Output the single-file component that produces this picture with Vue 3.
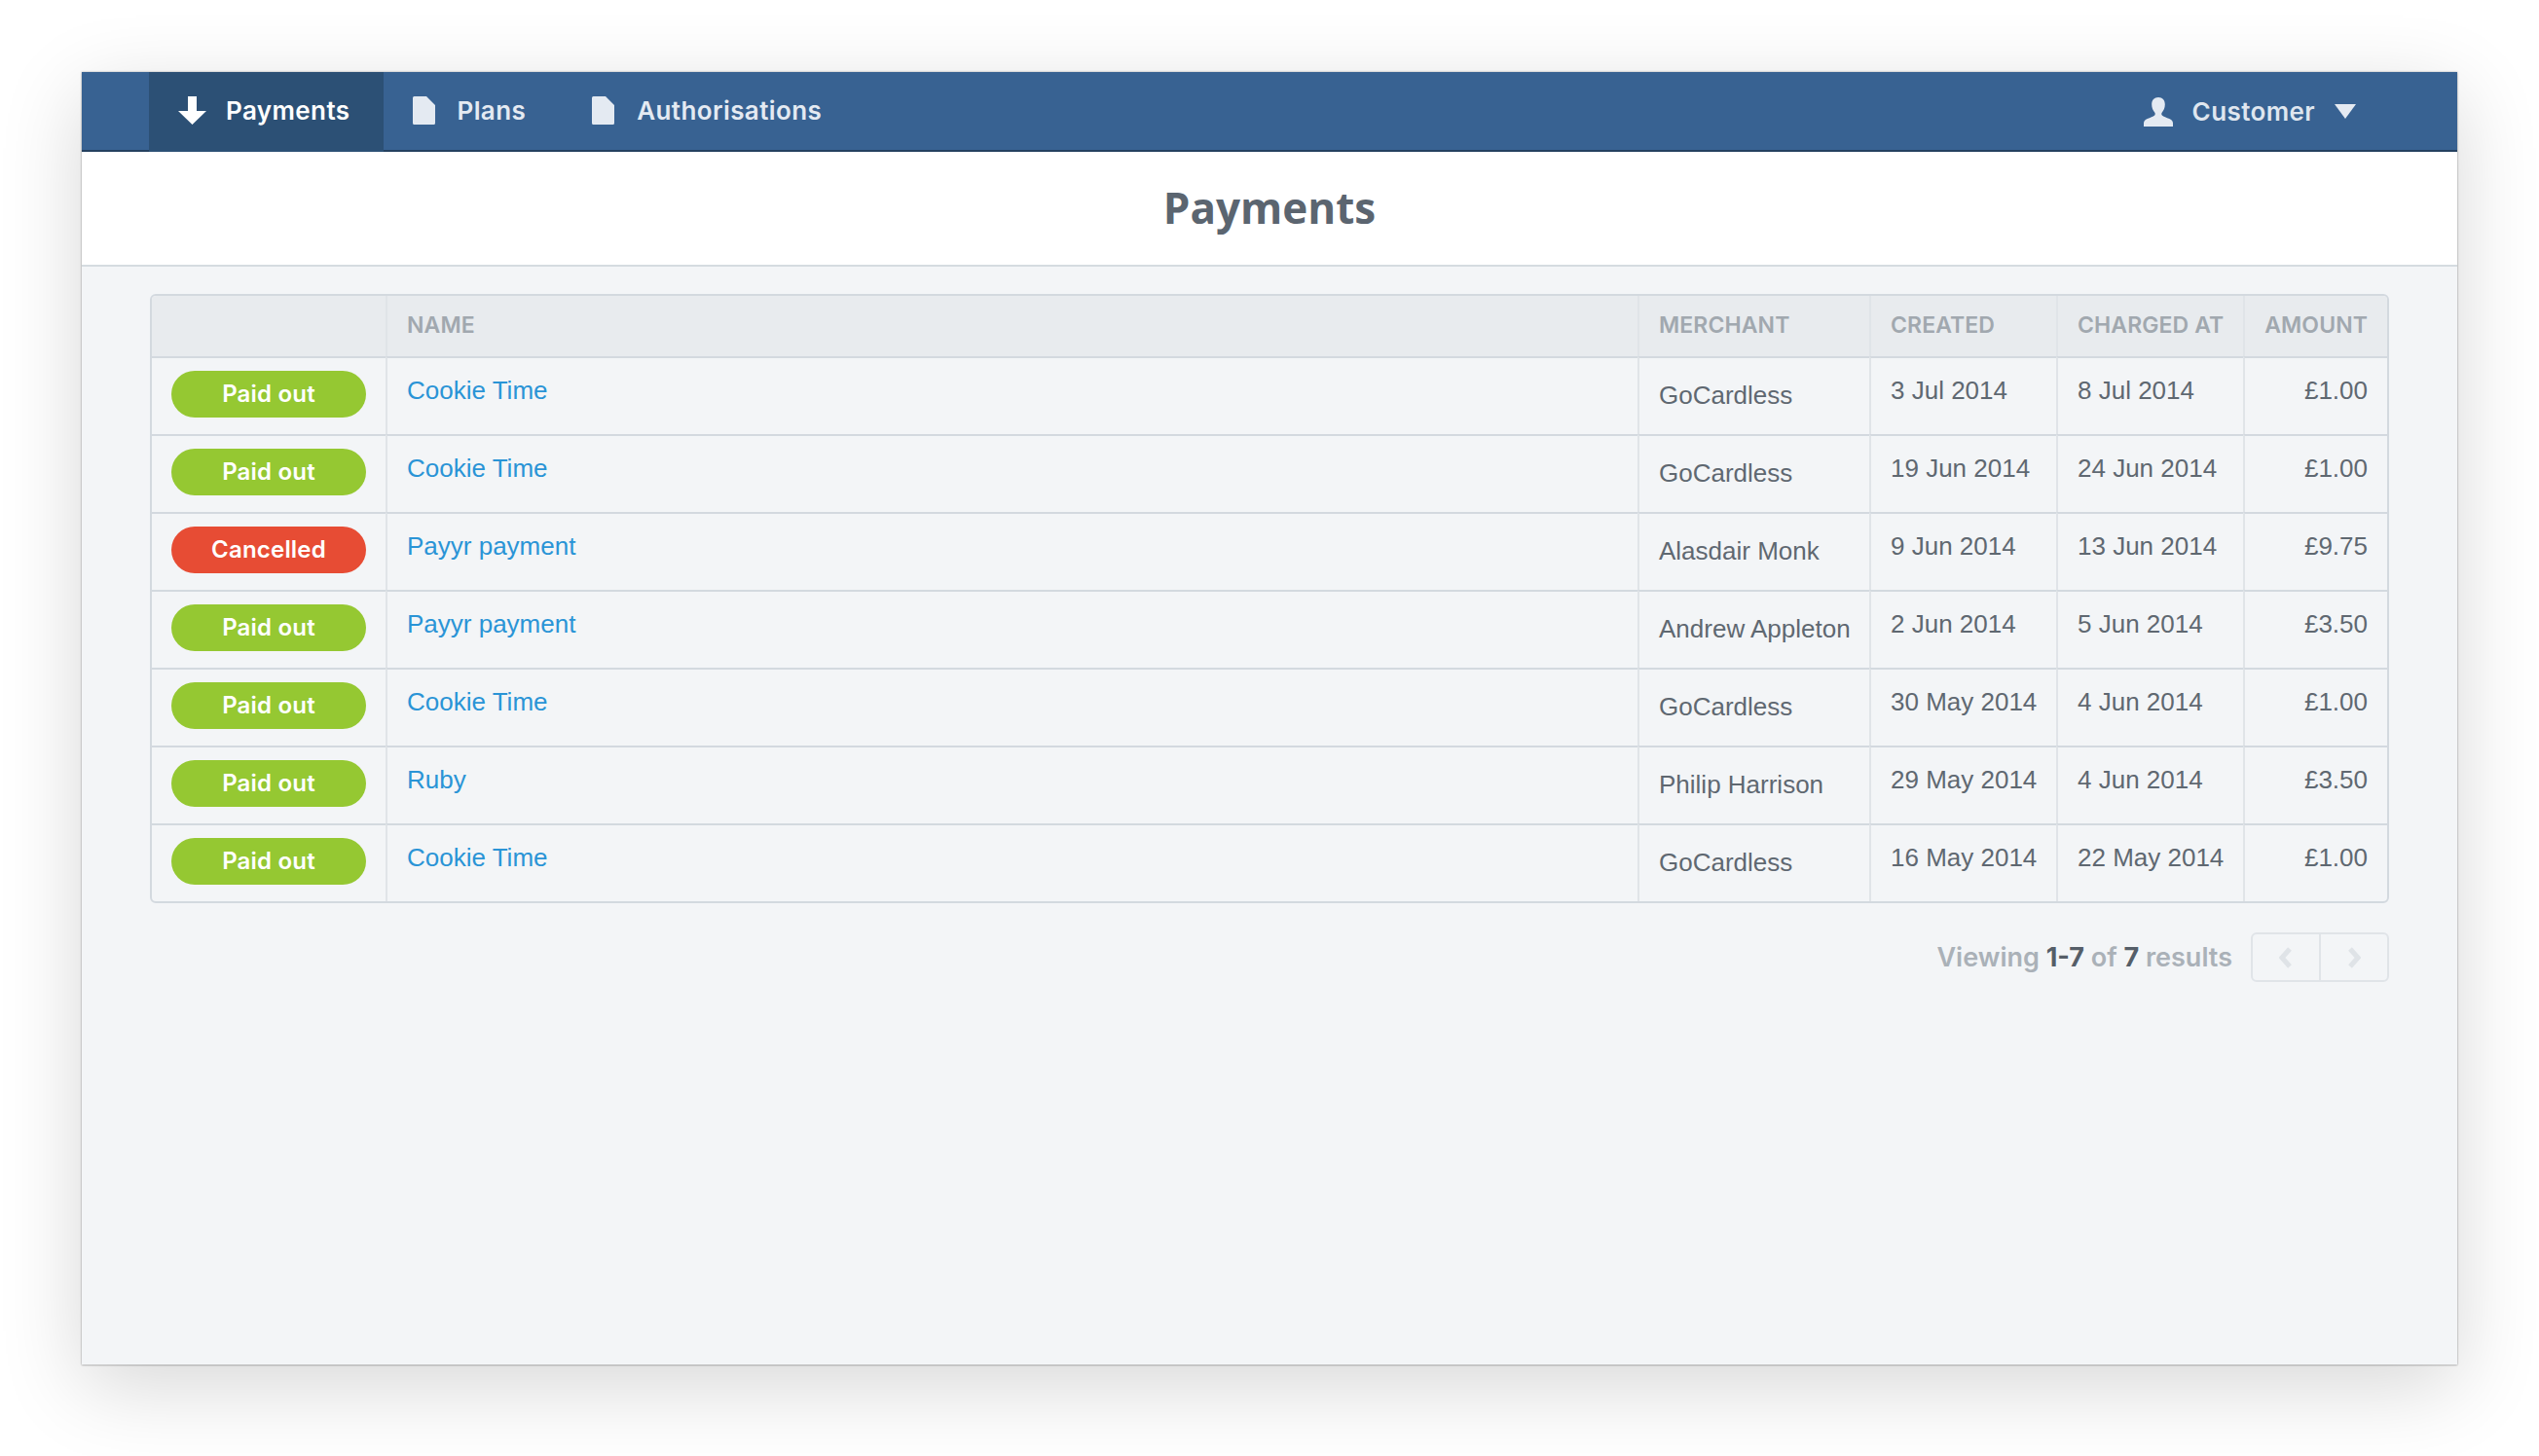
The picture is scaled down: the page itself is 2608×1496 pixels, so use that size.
<template>
  <div class="page">
    <div class="window">
      <nav class="nav">
        <div class="nav-links">
          <a class="nav-link active">
            <svg class="icon-arrow" viewBox="0 0 29 29"><path d="M10 0h9v15h10L14.500 29 0 15h10z" /></svg>
            Payments
          </a>
          <a class="nav-link">
            <svg class="icon-file" viewBox="0 0 23 29"><path d="M1.500 0H14l9 9v18.500a1.500 1.500 0 0 1-1.500 1.500h-20A1.500 1.500 0 0 1 0 27.500v-26A1.500 1.500 0 0 1 1.500 0z" /></svg>
            Plans
          </a>
          <a class="nav-link">
            <svg class="icon-file" viewBox="0 0 23 29"><path d="M1.500 0H14l9 9v18.500a1.500 1.500 0 0 1-1.500 1.500h-20A1.500 1.500 0 0 1 0 27.500v-26A1.500 1.500 0 0 1 1.500 0z" /></svg>
            Authorisations
          </a>
        </div>
        <div class="nav-user">
          <svg class="icon-user" viewBox="0 0 30 30"><path d="M15 0c4.300 0 6.800 3 6.800 7.300 0 3.300-1.300 6.300-3 8.200-.7.800-.7 2.200 0 2.900 1.500 1.400 4.600 2.300 7.500 3.700 2 1 3.700 2.300 3.700 4.400V30H0v-3.500c0-2.100 1.700-3.400 3.700-4.400 2.900-1.400 6-2.300 7.500-3.700.7-.7.7-2.100 0-2.900-1.700-1.900-3-4.900-3-8.200C8.200 3 10.700 0 15 0z" /></svg>
          <span>Customer</span>
          <svg class="icon-caret" viewBox="0 0 22 15"><path d="M0 0h22L11 15z" /></svg>
        </div>
      </nav>

      <header class="title-bar">
        <h1>Payments</h1>
      </header>

      <main class="content">
        <div class="table-wrap">
          <table>
            <colgroup>
              <col v-for="w in colWidths" :key="w.id" :style="{ width: w.px + 'px' }" />
            </colgroup>
            <thead>
              <tr>
                <th></th>
                <th>Name</th>
                <th>Merchant</th>
                <th>Created</th>
                <th>Charged at</th>
                <th class="right">Amount</th>
              </tr>
            </thead>
            <tbody>
              <tr v-for="p in payments" :key="p.id">
                <td class="status-cell">
                  <span class="badge" :class="p.status === 'Cancelled' ? 'red' : 'green'">{{ p.status }}</span>
                </td>
                <td><a class="link">{{ p.name }}</a></td>
                <td class="merchant">{{ p.merchant }}</td>
                <td>{{ p.created }}</td>
                <td>{{ p.charged }}</td>
                <td class="right">{{ p.amount }}</td>
              </tr>
            </tbody>
          </table>
        </div>

        <div class="pager">
          <span class="pager-text">Viewing <b>1-7</b> of <b>7</b> results</span>
          <div class="pager-btns">
            <button>
              <svg viewBox="0 0 14 24"><path d="M11 3 3 12l8 9" /></svg>
            </button>
            <button>
              <svg viewBox="0 0 14 24"><path d="M3 3l8 9-8 9" /></svg>
            </button>
          </div>
        </div>
      </main>
    </div>
  </div>
</template>

<script setup>
const colWidths = [
  { id: 'status', px: 240 },
  { id: 'name', px: 1286 },
  { id: 'merchant', px: 238 },
  { id: 'created', px: 192 },
  { id: 'charged', px: 192 },
  { id: 'amount', px: 148 }
];

const payments = [
  { id: 1, status: 'Paid out', name: 'Cookie Time', merchant: 'GoCardless', created: '3 Jul 2014', charged: '8 Jul 2014', amount: '£1.00' },
  { id: 2, status: 'Paid out', name: 'Cookie Time', merchant: 'GoCardless', created: '19 Jun 2014', charged: '24 Jun 2014', amount: '£1.00' },
  { id: 3, status: 'Cancelled', name: 'Payyr payment', merchant: 'Alasdair Monk', created: '9 Jun 2014', charged: '13 Jun 2014', amount: '£9.75' },
  { id: 4, status: 'Paid out', name: 'Payyr payment', merchant: 'Andrew Appleton', created: '2 Jun 2014', charged: '5 Jun 2014', amount: '£3.50' },
  { id: 5, status: 'Paid out', name: 'Cookie Time', merchant: 'GoCardless', created: '30 May 2014', charged: '4 Jun 2014', amount: '£1.00' },
  { id: 6, status: 'Paid out', name: 'Ruby', merchant: 'Philip Harrison', created: '29 May 2014', charged: '4 Jun 2014', amount: '£3.50' },
  { id: 7, status: 'Paid out', name: 'Cookie Time', merchant: 'GoCardless', created: '16 May 2014', charged: '22 May 2014', amount: '£1.00' }
];
</script>

<style scoped>
.page {
  padding: 74px 84px 94px;
  background: #fff;
  height: 1496px;
  box-sizing: border-box;
  overflow: hidden;
}

.window {
  height: 1328px;
  display: flex;
  flex-direction: column;
  background: #f3f5f7;
  box-shadow: 0 0 2px rgba(0, 0, 0, 0.3), 0 1px 2px rgba(0, 0, 0, 0.15), 0 22px 80px rgba(0, 0, 0, 0.16);
}

.nav {
  height: 80px;
  flex: none;
  display: flex;
  justify-content: space-between;
  padding-left: 69px;
  background: #386292;
  border-bottom: 2px solid #24405f;
  font-family: Inter, "Noto Sans", sans-serif;
  font-weight: 600;
  font-size: 26px;
  letter-spacing: 0.4px;
}

.nav-links {
  display: flex;
}

.nav-link {
  display: flex;
  align-items: center;
  gap: 20px;
  padding: 0 35px 3px 30px;
  color: #e4eaf2;
  margin-bottom: -2px;
}

.nav-link + .nav-link {
  padding-left: 30px;
  padding-right: 0;
  gap: 22px;
}

.nav-link + .nav-link + .nav-link {
  padding-left: 68px;
  gap: 23px;
}

.nav-link.active {
  background: #2c5075;
  color: #fff;
}

.icon-arrow {
  width: 29px;
  height: 29px;
  fill: #fff;
}

.icon-file {
  width: 23px;
  height: 29px;
  fill: #e4eaf2;
}

.nav-user {
  display: flex;
  align-items: center;
  padding-right: 104px;
  padding-top: 1px;
  color: #dfe6ef;
}

.icon-user {
  width: 30px;
  height: 30px;
  fill: #e4eaf2;
  margin-right: 20px;
}

.icon-caret {
  width: 22px;
  height: 15px;
  fill: #e4eaf2;
  margin-left: 20px;
}

.title-bar {
  height: 118px;
  flex: none;
  box-sizing: border-box;
  display: flex;
  align-items: center;
  justify-content: center;
  background: #fff;
  border-bottom: 2px solid #d5dbe0;
}

h1 {
  margin: 0 0 3px;
  font-family: "Open Sans", sans-serif;
  font-weight: 700;
  font-size: 44px;
  color: #5b6570;
}

.content {
  padding: 28px 70px 0;
}

.table-wrap {
  border: 2px solid #d3d9df;
  border-radius: 6px;
  overflow: hidden;
}

table {
  width: 2296px;
  table-layout: fixed;
  border-collapse: separate;
  border-spacing: 0;
  font-family: "Liberation Sans", Arial, sans-serif;
  font-size: 26px;
  color: #5f6871;
}

th {
  height: 62px;
  padding: 0 20px 2px;
  box-sizing: border-box;
  background: #e8ebee;
  text-align: left;
  font-family: Inter, "Noto Sans", sans-serif;
  font-weight: 600;
  font-size: 23px;
  letter-spacing: 0.1px;
  text-transform: uppercase;
  white-space: nowrap;
  color: #a1a8af;
}

td {
  height: 80px;
  box-sizing: border-box;
  padding: 15px 20px 0;
  vertical-align: top;
  line-height: 36px;
  border-top: 2px solid #d3d9df;
  white-space: nowrap;
}

th + th,
td + td {
  border-left: 2px solid #e0e4e8;
}

td.merchant {
  padding-top: 20px;
}

td.status-cell {
  padding: 13px 0 0 20px;
}

.right {
  text-align: right;
}

.link {
  color: #2a94d6;
}

.badge {
  display: block;
  width: 200px;
  height: 48px;
  border-radius: 24px;
  font-family: Inter, "Noto Sans", sans-serif;
  font-weight: 600;
  font-size: 24px;
  letter-spacing: 0.2px;
  line-height: 48px;
  text-align: center;
  color: #fff;
}

.green {
  background: #95c832;
}

.red {
  background: #e74c34;
}

.pager {
  display: flex;
  justify-content: flex-end;
  align-items: center;
  gap: 19px;
  margin-top: 30px;
}

.pager-text {
  font-family: Inter, "Noto Sans", sans-serif;
  font-weight: 600;
  font-size: 27px;
  color: #aab1b8;
}

.pager-text b {
  font-weight: 700;
  color: #555e68;
}

.pager-btns {
  display: flex;
  width: 142px;
  height: 51px;
  box-sizing: border-box;
  border: 2px solid #e0e4e8;
  border-radius: 6px;
}

.pager-btns button {
  flex: 1;
  padding: 0;
  border: 0;
  background: none;
  display: flex;
  align-items: center;
  justify-content: center;
}

.pager-btns button + button {
  border-left: 2px solid #e0e4e8;
}

.pager-btns svg {
  width: 14px;
  height: 24px;
  fill: none;
  stroke: #dfe3e7;
  stroke-width: 5;
}
</style>
